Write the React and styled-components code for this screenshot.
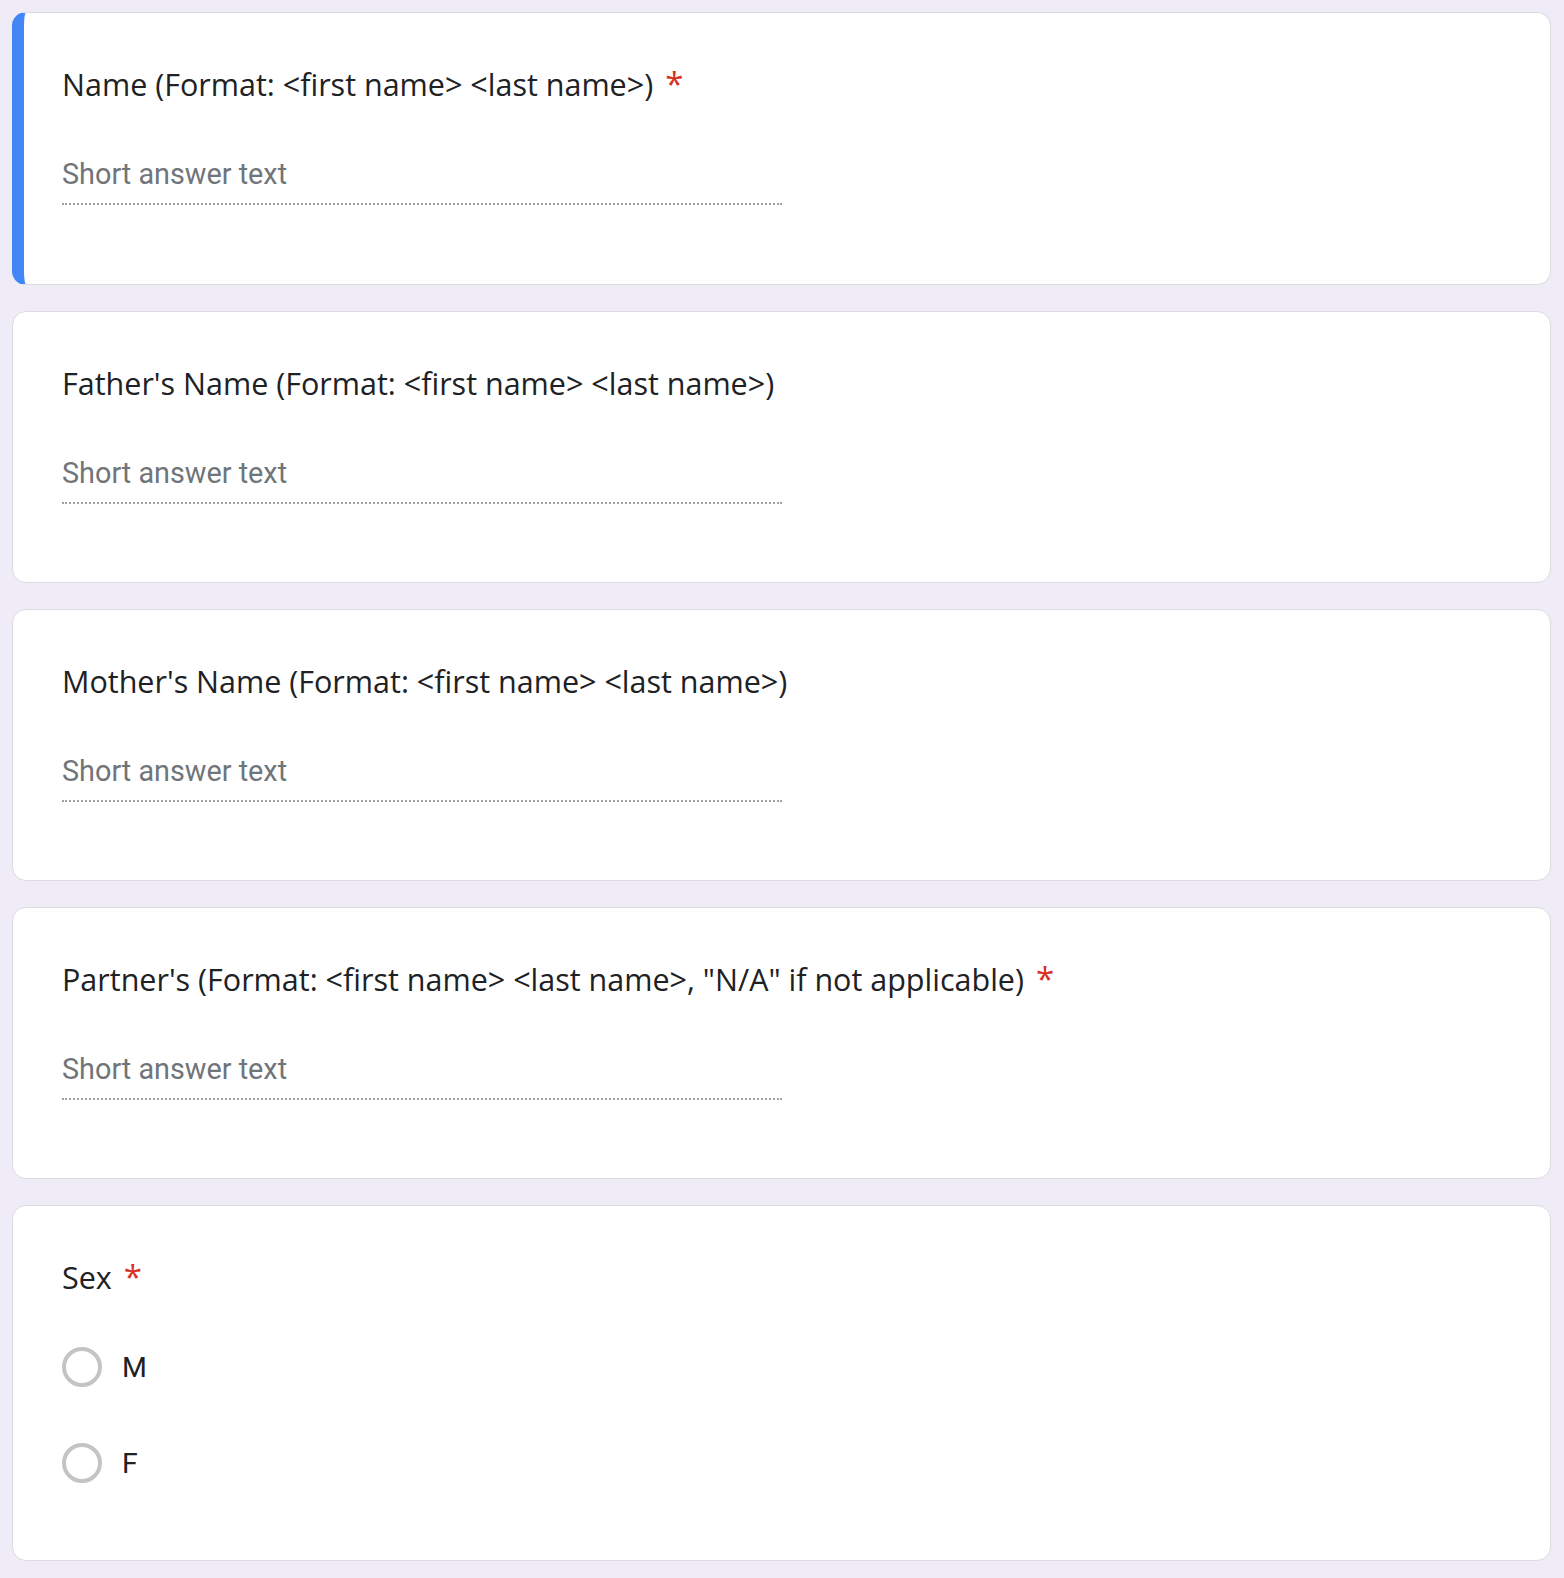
import React from "react";
import styled, { createGlobalStyle } from "styled-components";

const Global = createGlobalStyle`
  html, body { margin: 0; padding: 0; background: #efebf7; }
  * { box-sizing: border-box; }
`;

const Page = styled.div`
  display: flex;
  flex-direction: column;
  gap: 26px;
  padding: 12px 13px 19px 12px;
  background: #efebf7;
  min-height: 1578px;
`;

const Card = styled.section`
  background: #fff;
  border: 1px solid #dadce0;
  border-left: ${(p) => (p.$active ? "12px solid #4285f4" : "1px solid #dadce0")};
  border-radius: 14px;
  padding: 51px 49px ${(p) => p.$bottom ?? 78}px ${(p) => (p.$active ? 38 : 49)}px;
`;

const Title = styled.div`
  font-family: "Open Sans", sans-serif;
  font-size: 30.5px;
  line-height: 40px;
  color: #202124;
  white-space: nowrap;
`;

const Required = styled.span`
  color: #d93025;
  margin-left: 12px;
  font-size: 33px;
`;

const Answer = styled.div`
  width: 50%;
  margin-top: 52px;
  padding-bottom: 11px;
  border-bottom: 2px dotted #9aa0a6;
  font-family: Roboto, sans-serif;
  font-size: 28.8px;
  line-height: 36px;
  color: #70757a;
`;

const Options = styled.div`
  display: flex;
  flex-direction: column;
  margin-top: 22px;
`;

const Option = styled.label`
  display: flex;
  align-items: center;
  gap: 20px;
  height: 96px;
  font-family: Roboto, sans-serif;
  font-size: 28.5px;
  color: #202124;
`;

const Radio = styled.span`
  width: 40px;
  height: 40px;
  border-radius: 50%;
  border: 4px solid #c4c4c4;
  flex: none;
`;

const questions = [
  { title: "Name (Format: <first name> <last name>)", required: true, active: true },
  { title: "Father's Name (Format: <first name> <last name>)" },
  { title: "Mother's Name (Format: <first name> <last name>)" },
  { title: "Partner's (Format: <first name> <last name>, \"N/A\" if not applicable)", required: true },
];

export default function App() {
  return (
    <>
      <Global />
      <Page>
        {questions.map((q) => (
          <Card key={q.title} $active={q.active} $bottom={q.active ? 79 : undefined}>
            <Title>
              {q.title}
              {q.required && <Required>*</Required>}
            </Title>
            <Answer>Short answer text</Answer>
          </Card>
        ))}
        <Card $bottom={49}>
          <Title>
            Sex<Required>*</Required>
          </Title>
          <Options>
            <Option>
              <Radio />M
            </Option>
            <Option>
              <Radio />F
            </Option>
          </Options>
        </Card>
      </Page>
    </>
  );
}
